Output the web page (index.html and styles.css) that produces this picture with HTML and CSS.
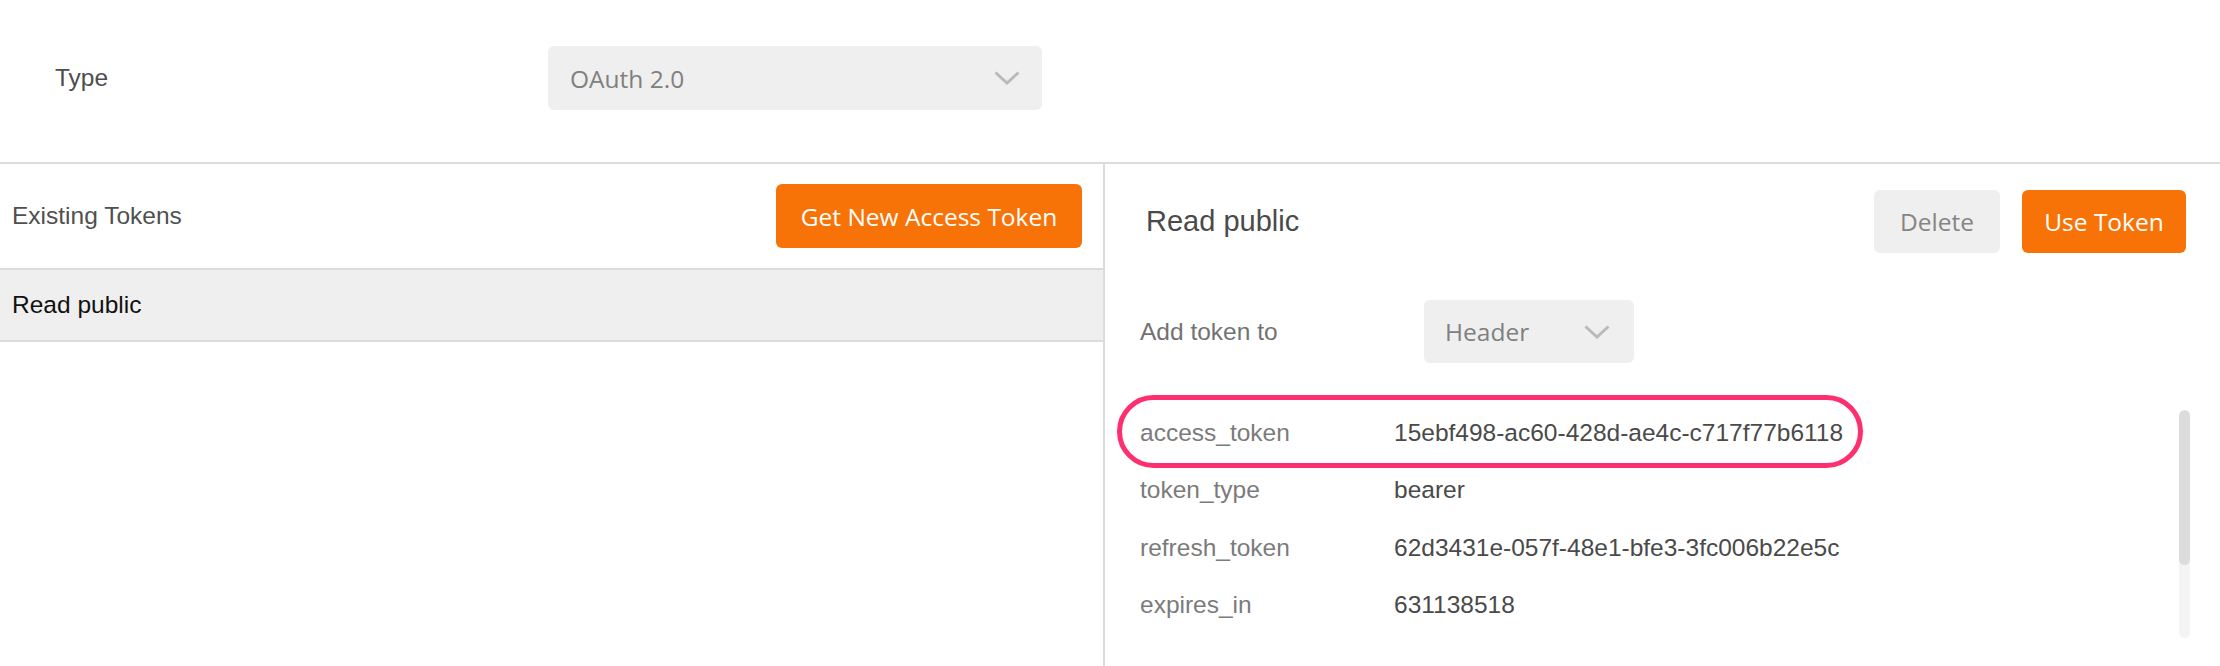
FILE: index.html
```html
<!DOCTYPE html>
<html lang="en">
<head>
<meta charset="utf-8">
<title>OAuth 2.0 Tokens</title>
<link rel="stylesheet" href="styles.css">
</head>
<body>
<div class="top">
  <div class="type-label">Type</div>
  <div class="select select-type">
    <span>OAuth 2.0</span>
    <svg class="chev" width="26" height="14" viewBox="0 0 26 14"><polyline points="1.5,1.5 13,12 24.5,1.5"/></svg>
  </div>
</div>
<div class="main">
  <section class="left">
    <div class="lhead">
      <span class="ltitle">Existing Tokens</span>
      <button class="btn btn-primary btn-get">Get New Access Token</button>
    </div>
    <div class="titem">Read public</div>
  </section>
  <section class="right">
    <div class="rhead">
      <h2 class="rtitle">Read public</h2>
      <div class="actions">
        <button class="btn btn-muted btn-delete">Delete</button>
        <button class="btn btn-primary btn-use">Use Token</button>
      </div>
    </div>
    <div class="addrow">
      <span class="addlabel">Add token to</span>
      <div class="select select-header">
        <span>Header</span>
        <svg class="chev" width="26" height="14" viewBox="0 0 26 14"><polyline points="1.5,1.5 13,12 24.5,1.5"/></svg>
      </div>
    </div>
    <div class="tokens">
      <div class="tlist">
        <div class="trow hl"><span class="k">access_token</span><span class="v">15ebf498-ac60-428d-ae4c-c717f77b6118</span></div>
        <div class="trow"><span class="k">token_type</span><span class="v">bearer</span></div>
        <div class="trow"><span class="k">refresh_token</span><span class="v">62d3431e-057f-48e1-bfe3-3fc006b22e5c</span></div>
        <div class="trow"><span class="k">expires_in</span><span class="v">631138518</span></div>
      </div>
      <div class="scrollbar"><div class="thumb"></div></div>
    </div>
  </section>
</div>
</body>
</html>
```
FILE: styles.css
```css
html, body {
  margin: 0;
  padding: 0;
  background: #ffffff;
}
body {
  width: 2220px;
  height: 666px;
  overflow: hidden;
  font-family: "Liberation Sans", Arial, sans-serif;
  font-size: 24.5px;
  color: #4d4d4d;
}

.top {
  box-sizing: border-box;
  height: 162px;
  padding: 46px 0 0 55px;
  display: flex;
  align-items: flex-start;
}
.type-label {
  width: 493px;
  line-height: 64px;
  color: #4d4d4d;
}

.select {
  box-sizing: border-box;
  display: flex;
  align-items: center;
  justify-content: space-between;
  background: #efefef;
  border-radius: 6px;
  font-family: "Open Sans", sans-serif;
  font-size: 24.5px;
  color: #808080;
}
.select-type {
  width: 494px;
  height: 64px;
  padding: 0 22px 0 22px;
}
.select-header {
  width: 210px;
  height: 63px;
  padding: 0 24px 0 21px;
}
.chev polyline {
  fill: none;
  stroke: #bababa;
  stroke-width: 3;
}

.main {
  display: flex;
  height: 502px;
  border-top: 2px solid #dcdcdc;
}

.left {
  width: 1103px;
  flex-shrink: 0;
  border-right: 2px solid #dcdcdc;
}
.lhead {
  box-sizing: border-box;
  height: 106px;
  padding: 0 21px 0 12px;
  display: flex;
  align-items: center;
  justify-content: space-between;
  border-bottom: 2px solid #dcdcdc;
}
.ltitle {
  color: #505050;
}
.titem {
  height: 70px;
  padding-left: 12px;
  display: flex;
  align-items: center;
  background: #efefef;
  border-bottom: 2px solid #dcdcdc;
  color: #111111;
}

.btn {
  border: none;
  border-radius: 6px;
  height: 64px;
  font-family: "Open Sans", sans-serif;
  font-size: 24.5px;
  cursor: pointer;
  padding: 0 21px;
}
.btn-primary {
  background: #f77308;
  color: #ffffff;
}
.btn-muted {
  background: #efefef;
  color: #858585;
}
.btn-get {
  width: 306px;
  padding: 0;
}
.btn-delete {
  width: 126px;
  height: 63px;
  padding: 0;
}
.btn-use {
  width: 164px;
  height: 63px;
  padding: 0;
}

.right {
  flex: 1;
  display: flex;
  flex-direction: column;
  padding: 0 34px 0 35px;
}
.rhead {
  margin-top: 26px;
  height: 63px;
  display: flex;
  align-items: center;
  justify-content: space-between;
}
.rtitle {
  margin: 0;
  padding-left: 6px;
  font-size: 29px;
  font-weight: normal;
  color: #4a4a4a;
}
.actions {
  display: flex;
  gap: 22px;
}

.addrow {
  margin-top: 47px;
  height: 63px;
  display: flex;
  align-items: center;
}
.addlabel {
  width: 284px;
  color: #727272;
}

.tokens {
  margin-top: 41px;
  display: flex;
  align-items: flex-start;
}
.tlist {
  flex: 1;
}
.trow {
  height: 57.5px;
  display: flex;
  align-items: center;
}
.trow .k {
  width: 254px;
  color: #7b7b7b;
}
.trow .v {
  color: #4a4a4a;
}
.hl {
  position: relative;
  width: max-content;
}
.hl::after {
  content: "";
  position: absolute;
  left: -23px;
  right: -20px;
  top: -9px;
  bottom: -6.5px;
  border: 5px solid #fe2f6e;
  border-radius: 40px;
}

.scrollbar {
  width: 11px;
  height: 228px;
  margin-top: 6px;
  margin-right: -4px;
  background: #f4f4f4;
  border-radius: 6px;
  overflow: hidden;
}
.thumb {
  height: 155px;
  background: #dcdcdc;
  border-radius: 6px;
}
```
